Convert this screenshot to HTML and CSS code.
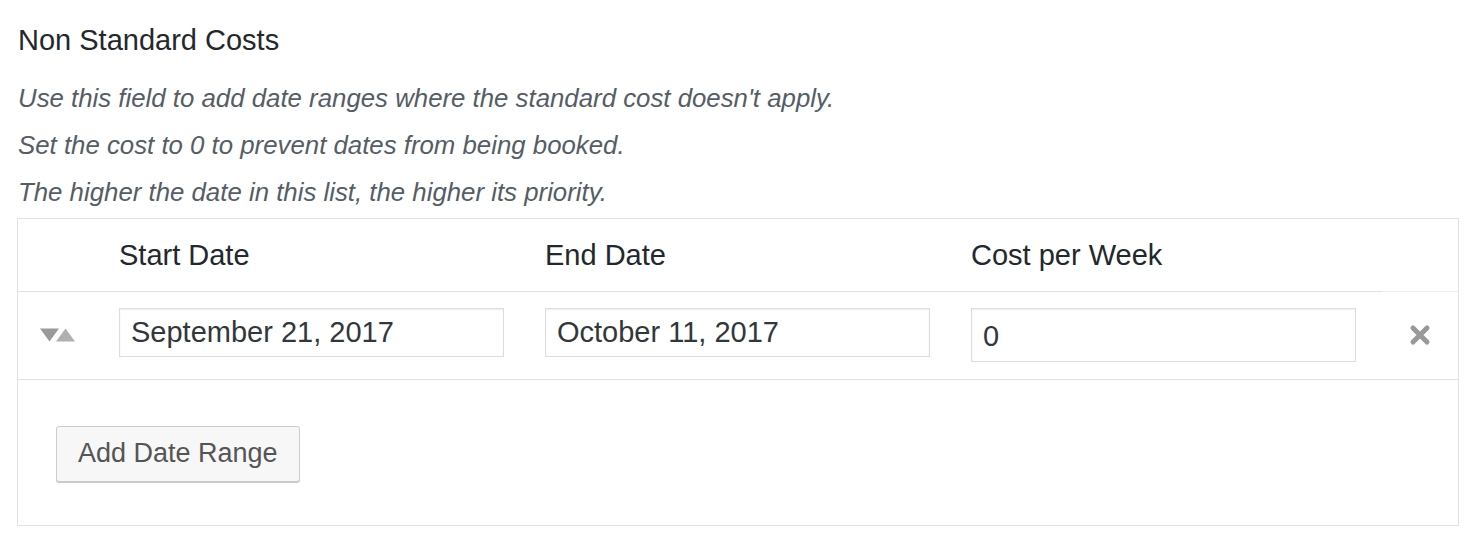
FILE: index.html
```html
<!DOCTYPE html>
<html lang="en">
<head>
  <meta charset="UTF-8" />
  <meta name="viewport" content="width=device-width, initial-scale=1.0"/>
  <title>Non Standard Costs</title>
  <link rel="stylesheet" href="styles.css">
</head>
<body>

  <div class="field">
    <h2 class="field-title">Non Standard Costs</h2>

    <p class="field-desc">Use this field to add date ranges where the standard cost doesn't apply.</p>
    <p class="field-desc">Set the cost to 0 to prevent dates from being booked.</p>
    <p class="field-desc">The higher the date in this list, the higher its priority.</p>

    <div class="ranges">
      <table class="ranges-table">
        <colgroup>
          <col class="col-sort">
          <col class="col-date">
          <col class="col-date">
          <col class="col-date">
          <col>
        </colgroup>
        <thead>
          <tr>
            <th></th>
            <th>Start Date</th>
            <th>End Date</th>
            <th>Cost per Week</th>
            <th class="th-remove"></th>
          </tr>
        </thead>
        <tbody>
          <tr>
            <td class="cell-sort">
              <svg class="sort-icon" width="36" height="14" viewBox="0 0 36 14">
                <polygon points="0,0.5 19,0.5 9.5,13.5" fill="#9a9a9a"/>
                <polygon points="16,13.5 35,13.5 25.5,0.5" fill="#b0b0b0"/>
              </svg>
            </td>
            <td class="cell-input"><input class="text-input" type="text" value="September 21, 2017"></td>
            <td class="cell-input"><input class="text-input" type="text" value="October 11, 2017"></td>
            <td class="cell-input"><input class="text-input text-input-cost" type="text" value="0"></td>
            <td class="cell-remove">
              <svg class="remove-icon" width="22" height="22" viewBox="0 0 22 22">
                <path d="M4 4 L18 18 M18 4 L4 18" stroke="#999" stroke-width="5" stroke-linecap="round"/>
              </svg>
            </td>
          </tr>
        </tbody>
      </table>

      <div class="ranges-footer">
        <button class="button" type="button">Add Date Range</button>
      </div>
    </div>
  </div>

</body>
</html>
```

FILE: styles.css
```css
* {
  box-sizing: border-box;
}

body {
  margin: 0;
  padding: 0;
  background: #fff;
  font-family: "Liberation Sans", Arial, sans-serif;
  color: #23282d;
}

.field {
  padding: 23px 15px 0 17px;
}

.field-title {
  margin: 0 0 17px 1px;
  font-size: 29px;
  line-height: 35px;
  font-weight: normal;
  color: #23282d;
}

.field-desc {
  margin: 0 0 0 1px;
  font-size: 25.8px;
  line-height: 47px;
  font-style: italic;
  color: #555d66;
}

.ranges {
  margin-top: 2px;
  border: 1px solid #e3e3e3;
}

.ranges-table {
  width: 100%;
  table-layout: fixed;
  border-collapse: collapse;
}

.col-sort {
  width: 86px;
}

.col-date {
  width: 426px;
}

.ranges-table thead tr {
  height: 72px;
}

.ranges-table th {
  padding: 2px 0 0 15px;
  text-align: left;
  font-size: 29px;
  font-weight: normal;
  color: #23282d;
  border-bottom: 1px solid #e1e1e1;
}

.ranges-table th.th-remove {
  border-bottom-color: #f0f0f0;
}

.ranges-table tbody tr {
  height: 88px;
}

.ranges-table td {
  border-bottom: 1px solid #e1e1e1;
  padding: 0;
}

.cell-sort {
  vertical-align: middle;
  padding-left: 22px !important;
}

.sort-icon {
  display: block;
}

.cell-input {
  vertical-align: top;
  padding: 16px 0 0 15px !important;
}

.text-input {
  display: block;
  width: 385px;
  height: 49px;
  margin: 0;
  padding: 0 11px;
  border: 1px solid #ddd;
  border-radius: 0;
  box-shadow: inset 0 1px 2px rgba(0, 0, 0, 0.07);
  background: #fff;
  font-family: "Liberation Sans", Arial, sans-serif;
  font-size: 29px;
  color: #32373c;
  outline: none;
}

.text-input-cost {
  height: 54px;
  padding-top: 4px;
}

.cell-remove {
  vertical-align: middle;
  text-align: center;
}

.remove-icon {
  display: inline-block;
  vertical-align: middle;
}

.ranges-footer {
  padding: 46px 0 43px 38px;
}

.button {
  display: inline-block;
  height: 56px;
  margin: 0;
  padding: 0 21px;
  background: #f7f7f7;
  border: 1px solid #ccc;
  border-radius: 3px;
  box-shadow: 0 1px 0 #ccc;
  font-family: "Liberation Sans", Arial, sans-serif;
  font-size: 27px;
  color: #555;
  cursor: pointer;
}
```
